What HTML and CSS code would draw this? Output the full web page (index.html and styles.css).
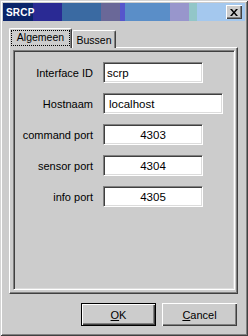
FILE: index.html
```html
<!DOCTYPE html>
<html>
<head>
<meta charset="utf-8">
<link rel="stylesheet" href="styles.css">
</head>
<body>
<div class="window">
  <div class="titlebar">
    <span class="title">SRCP</span>
    <button class="close" aria-label="Sluiten">
      <svg width="8" height="7" viewBox="0 0 8 7"><path d="M0 0h2l2 2.4l2-2.4h2l-3 3.5l3 3.5h-2l-2-2.4l-2 2.4h-2l3-3.5z" fill="#000"/></svg>
    </button>
  </div>
  <div class="tabs">
    <div class="tab tab-active"><span class="focus">Algemeen</span></div>
    <div class="tab tab-idle">Bussen</div>
  </div>
  <div class="panel">
    <div class="inset">
      <div class="form">
        <span class="label">Interface ID</span><div class="field">scrp</div>
        <span class="label">Hostnaam</span><div class="field field-wide">localhost</div>
        <span class="label">command port</span><div class="field field-num">4303</div>
        <span class="label">sensor port</span><div class="field field-num">4304</div>
        <span class="label">info port</span><div class="field field-num">4305</div>
      </div>
    </div>
  </div>
  <div class="buttons">
    <button class="btn btn-default"><u>O</u>K</button>
    <button class="btn"><u>C</u>ancel</button>
  </div>
</div>
</body>
</html>
```

FILE: styles.css
```css
* { box-sizing: border-box; }

body {
  margin: 0;
  font: 11px "Liberation Sans", Arial, sans-serif;
  color: #000;
}

.window {
  width: 248px;
  height: 336px;
  padding: 3px;
  background: #cccccc;
  display: flex;
  flex-direction: column;
  box-shadow: inset 1px 1px #d4d4d4, inset -1px -1px #404040, inset 2px 2px #ffffff, inset -2px -2px #808080;
}

.window > * { flex: none; }

.titlebar {
  height: 18px;
  display: flex;
  align-items: center;
  justify-content: space-between;
  padding: 0 3px;
  background: linear-gradient(to right,
    #0a246a 0, #0a246a 30px,
    #2a2a94 30px, #2a2a94 59px,
    #3a6aa2 59px, #3a6aa2 98px,
    #6a6898 98px, #6a6898 117px,
    #5656cc 117px, #5656cc 122px,
    #5a8ec8 122px, #5a8ec8 167px,
    #9896cc 167px, #9896cc 186px,
    #92c6c8 186px, #92c6c8 194px,
    #a4c8ee 194px, #a4c8ee 100%);
}

.title {
  color: #fff;
  font-weight: bold;
  font-size: 10px;
  letter-spacing: 0.2px;
}

.close {
  width: 16px;
  height: 14px;
  padding: 0;
  border: 0;
  background: #cccccc;
  display: flex;
  align-items: center;
  justify-content: center;
  box-shadow: inset 1px 1px #ffffff, inset -1px -1px #404040, inset -2px -2px #808080;
}

.tabs {
  display: flex;
  align-items: flex-end;
  height: 20px;
  margin: 7px 0 0 6px;
  position: relative;
  z-index: 1;
}

.tab {
  background: #cccccc;
  border-top: 1px solid #ffffff;
  border-left: 1px solid #ffffff;
  border-right: 1px solid #404040;
  border-top-left-radius: 2px;
  border-top-right-radius: 2px;
  box-shadow: inset -1px 0 #808080;
}

.tab-active {
  width: 63px;
  height: 20px;
  padding: 1px 0 0 1px;
}

.focus {
  display: block;
  width: 59px;
  height: 16px;
  border: 1px dotted #000;
  line-height: 12px;
  text-align: center;
  font-size: 10.5px;
}

.tab-idle {
  width: 44px;
  height: 18px;
  padding-top: 3px;
  line-height: 13px;
  text-align: center;
  font-size: 10.5px;
}

.panel {
  margin: -1px 7px 0 6px;
  height: 247px;
  border-top: 1px solid #ffffff;
  border-left: 1px solid #ffffff;
  border-right: 1px solid #404040;
  border-bottom: 1px solid #404040;
  box-shadow: inset -1px -1px #808080;
  padding: 2px 2px 3px 3px;
}

.inset {
  height: 100%;
  border-top: 1px solid #808080;
  border-left: 1px solid #808080;
  border-right: 1px solid #ffffff;
  border-bottom: 1px solid #ffffff;
  box-shadow: inset 1px 1px #404040, inset -1px -1px #dcdcdc;
}

.form {
  display: grid;
  grid-template-columns: 79px auto;
  grid-auto-rows: 21px;
  column-gap: 10px;
  row-gap: 10px;
  padding-top: 11px;
}

.label {
  justify-self: end;
  align-self: center;
  padding-top: 2px;
  line-height: 13px;
}

.field {
  width: 100px;
  height: 21px;
  background: #ffffff;
  border-top: 1px solid #808080;
  border-left: 1px solid #808080;
  border-right: 1px solid #ffffff;
  border-bottom: 1px solid #ffffff;
  box-shadow: inset 1px 1px #404040, inset -1px -1px #dcdcdc;
  padding: 2px 3px 0 3px;
  line-height: 16px;
  font-size: 11.5px;
}

.field-wide {
  width: 120px;
  padding-left: 5px;
}

.field-num {
  text-align: center;
}

.buttons {
  display: flex;
  justify-content: flex-end;
  gap: 6px;
  margin-top: 9px;
  padding-right: 8px;
}

.btn {
  width: 75px;
  height: 23px;
  padding: 0;
  border: 0;
  background: #cccccc;
  font: 11px "Liberation Sans", Arial, sans-serif;
  color: #000;
  box-shadow: inset 1px 1px #ffffff, inset -1px -1px #404040, inset -2px -2px #808080;
}

.btn-default {
  border: 1px solid #000;
}
```
